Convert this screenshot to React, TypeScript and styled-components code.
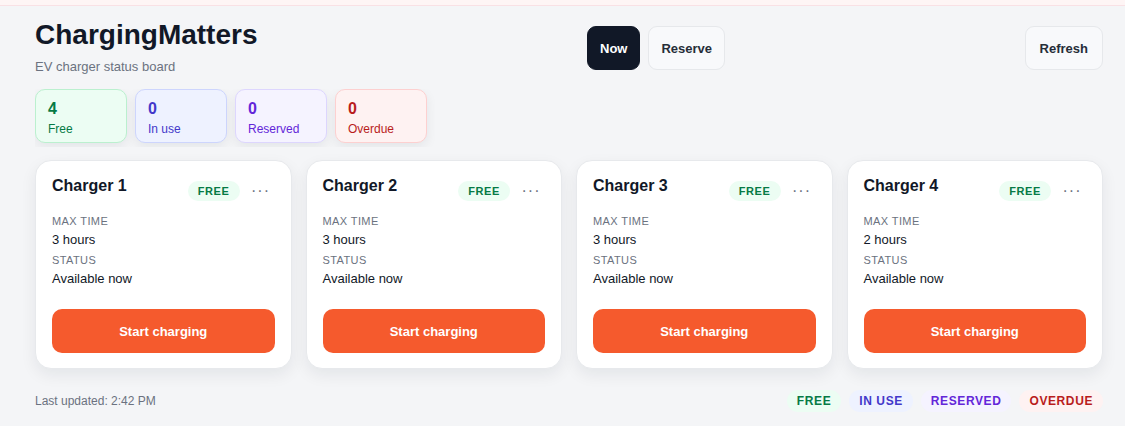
import React from 'react';
import styled, { createGlobalStyle } from 'styled-components';

const GlobalStyle = createGlobalStyle`
  html, body {
    margin: 0;
    padding: 0;
    background: #f4f5f7;
    font-family: "Liberation Sans", Arial, sans-serif;
    color: #111827;
  }
`;

type Tone = 'free' | 'inuse' | 'reserved' | 'overdue';

const tones: Record<Tone, { bg: string; border: string; text: string }> = {
  free: { bg: '#ecfdf3', border: '#bbf0cf', text: '#067a45' },
  inuse: { bg: '#eef2ff', border: '#cdd5fd', text: '#4338ca' },
  reserved: { bg: '#f5f3ff', border: '#ddd6fe', text: '#6326d9' },
  overdue: { bg: '#fef2f2', border: '#fdd0d0', text: '#b91c1c' },
};

const TopBar = styled.div`
  height: 5px;
  background: #fef5f5;
  border-bottom: 1px solid #f9e1e5;
`;

const Page = styled.div`
  padding: 0 22px 0 35px;
`;

const Header = styled.header`
  display: flex;
  align-items: flex-start;
  padding-top: 12px;
`;

const TitleBlock = styled.div`
  width: 552px;
`;

const Title = styled.h1`
  margin: 0;
  font-size: 28px;
  font-weight: 700;
  line-height: 34px;
  color: #111827;
`;

const Subtitle = styled.div`
  margin-top: 7px;
  font-size: 13px;
  line-height: 15px;
  color: #6b7280;
`;

const Nav = styled.div`
  display: flex;
  gap: 8px;
  padding-top: 8px;
`;

const Spacer = styled.div`
  flex: 1;
`;

const Button = styled.button<{ $active?: boolean }>`
  height: 44px;
  padding: 0 12px;
  border-radius: 9px;
  border: 1px solid ${(p) => (p.$active ? '#111827' : '#e6e8eb')};
  background: ${(p) => (p.$active ? '#111827' : '#f8f9fb')};
  color: ${(p) => (p.$active ? '#ffffff' : '#262d38')};
  font-family: inherit;
  font-size: 13px;
  font-weight: 700;
  cursor: pointer;
`;

const RefreshButton = styled(Button)`
  padding: 0 14px;
`;

const RefreshWrap = styled.div`
  padding-top: 8px;
`;

const StatsWrap = styled.div`
  display: inline-flex;
  gap: 8px;
  margin-top: 15px;
  padding: 0 8px 4px 0;
  overflow: hidden;
`;

const Stat = styled.div<{ $tone: Tone }>`
  width: 92px;
  height: 54px;
  box-sizing: border-box;
  padding: 10px 12px 0;
  border-radius: 10px;
  background: ${(p) => tones[p.$tone].bg};
  border: 1px solid ${(p) => tones[p.$tone].border};
  color: ${(p) => tones[p.$tone].text};
  box-shadow: 0 4px 12px rgba(15, 23, 42, 0.07);
`;

const StatValue = styled.div`
  font-size: 16px;
  font-weight: 700;
  line-height: 18px;
`;

const StatLabel = styled.div`
  font-size: 12px;
  margin-top: 4px;
`;

const Grid = styled.div`
  display: grid;
  grid-template-columns: repeat(4, 1fr);
  gap: 14px;
  margin-top: 13px;
`;

const Card = styled.div`
  height: 209px;
  box-sizing: border-box;
  padding: 16px 16px 15px;
  background: #ffffff;
  border: 1px solid #e7e9ec;
  border-radius: 16px;
  box-shadow: 0 6px 16px rgba(15, 23, 42, 0.07);
  display: flex;
  flex-direction: column;
`;

const CardHead = styled.div`
  display: flex;
  align-items: flex-start;
`;

const CardTitle = styled.div`
  font-size: 16px;
  font-weight: 700;
  line-height: 18px;
  flex: 1;
`;

const Badge = styled.span<{ $tone: Tone }>`
  display: inline-flex;
  align-items: center;
  height: 20px;
  padding: 0 10px;
  border-radius: 10px;
  background: ${(p) => tones[p.$tone].bg};
  color: ${(p) => tones[p.$tone].text};
  font-size: 11px;
  font-weight: 700;
  letter-spacing: 0.6px;
`;

const CardBadge = styled(Badge)`
  margin-top: 4px;
`;

const Dots = styled.button`
  width: 35px;
  height: 28px;
  padding: 0 0 0 7px;
  border: none;
  background: none;
  color: #6b7280;
  font-size: 16px;
  letter-spacing: 1px;
  cursor: pointer;
`;

const Field = styled.div`
  margin-top: 10px;
  & + & {
    margin-top: 5px;
  }
`;

const FieldLabel = styled.div`
  font-size: 11px;
  color: #6b7280;
  letter-spacing: 0.4px;
  line-height: 13px;
`;

const FieldValue = styled.div`
  font-size: 13px;
  line-height: 18px;
  color: #111827;
  margin-top: 3px;
`;

const StartButton = styled.button`
  margin-top: auto;
  height: 44px;
  border: none;
  border-radius: 10px;
  background: #f55a2d;
  color: #ffffff;
  font-family: inherit;
  font-size: 13px;
  font-weight: 700;
  cursor: pointer;
`;

const Footer = styled.footer`
  display: flex;
  align-items: center;
  justify-content: space-between;
  margin-top: 21px;
  padding-bottom: 14px;
`;

const Updated = styled.div`
  font-size: 12px;
  color: #6b7280;
`;

const Legend = styled.div`
  display: flex;
  gap: 8px;
`;

const LegendPill = styled(Badge)`
  height: 22px;
  padding: 0 10px;
  border-radius: 11px;
  font-size: 12px;
  letter-spacing: 0.6px;
`;

const stats: { tone: Tone; value: number; label: string }[] = [
  { tone: 'free', value: 4, label: 'Free' },
  { tone: 'inuse', value: 0, label: 'In use' },
  { tone: 'reserved', value: 0, label: 'Reserved' },
  { tone: 'overdue', value: 0, label: 'Overdue' },
];

const chargers = [
  { name: 'Charger 1', maxTime: '3 hours' },
  { name: 'Charger 2', maxTime: '3 hours' },
  { name: 'Charger 3', maxTime: '3 hours' },
  { name: 'Charger 4', maxTime: '2 hours' },
];

const legend: { tone: Tone; label: string }[] = [
  { tone: 'free', label: 'FREE' },
  { tone: 'inuse', label: 'IN USE' },
  { tone: 'reserved', label: 'RESERVED' },
  { tone: 'overdue', label: 'OVERDUE' },
];

const App = (): JSX.Element => {
  return (
    <>
      <GlobalStyle />
      <TopBar />
      <Page>
        <Header>
          <TitleBlock>
            <Title>ChargingMatters</Title>
            <Subtitle>EV charger status board</Subtitle>
          </TitleBlock>
          <Nav>
            <Button $active>Now</Button>
            <Button>Reserve</Button>
          </Nav>
          <Spacer />
          <RefreshWrap>
            <RefreshButton>Refresh</RefreshButton>
          </RefreshWrap>
        </Header>

        <StatsWrap>
          {stats.map((s) => (
            <Stat key={s.label} $tone={s.tone}>
              <StatValue>{s.value}</StatValue>
              <StatLabel>{s.label}</StatLabel>
            </Stat>
          ))}
        </StatsWrap>

        <Grid>
          {chargers.map((c) => (
            <Card key={c.name}>
              <CardHead>
                <CardTitle>{c.name}</CardTitle>
                <CardBadge $tone="free">FREE</CardBadge>
                <Dots aria-label="More">···</Dots>
              </CardHead>
              <Field>
                <FieldLabel>MAX TIME</FieldLabel>
                <FieldValue>{c.maxTime}</FieldValue>
              </Field>
              <Field>
                <FieldLabel>STATUS</FieldLabel>
                <FieldValue>Available now</FieldValue>
              </Field>
              <StartButton>Start charging</StartButton>
            </Card>
          ))}
        </Grid>

        <Footer>
          <Updated>Last updated: 2:42 PM</Updated>
          <Legend>
            {legend.map((l) => (
              <LegendPill key={l.label} $tone={l.tone}>
                {l.label}
              </LegendPill>
            ))}
          </Legend>
        </Footer>
      </Page>
    </>
  );
};

export default App;
